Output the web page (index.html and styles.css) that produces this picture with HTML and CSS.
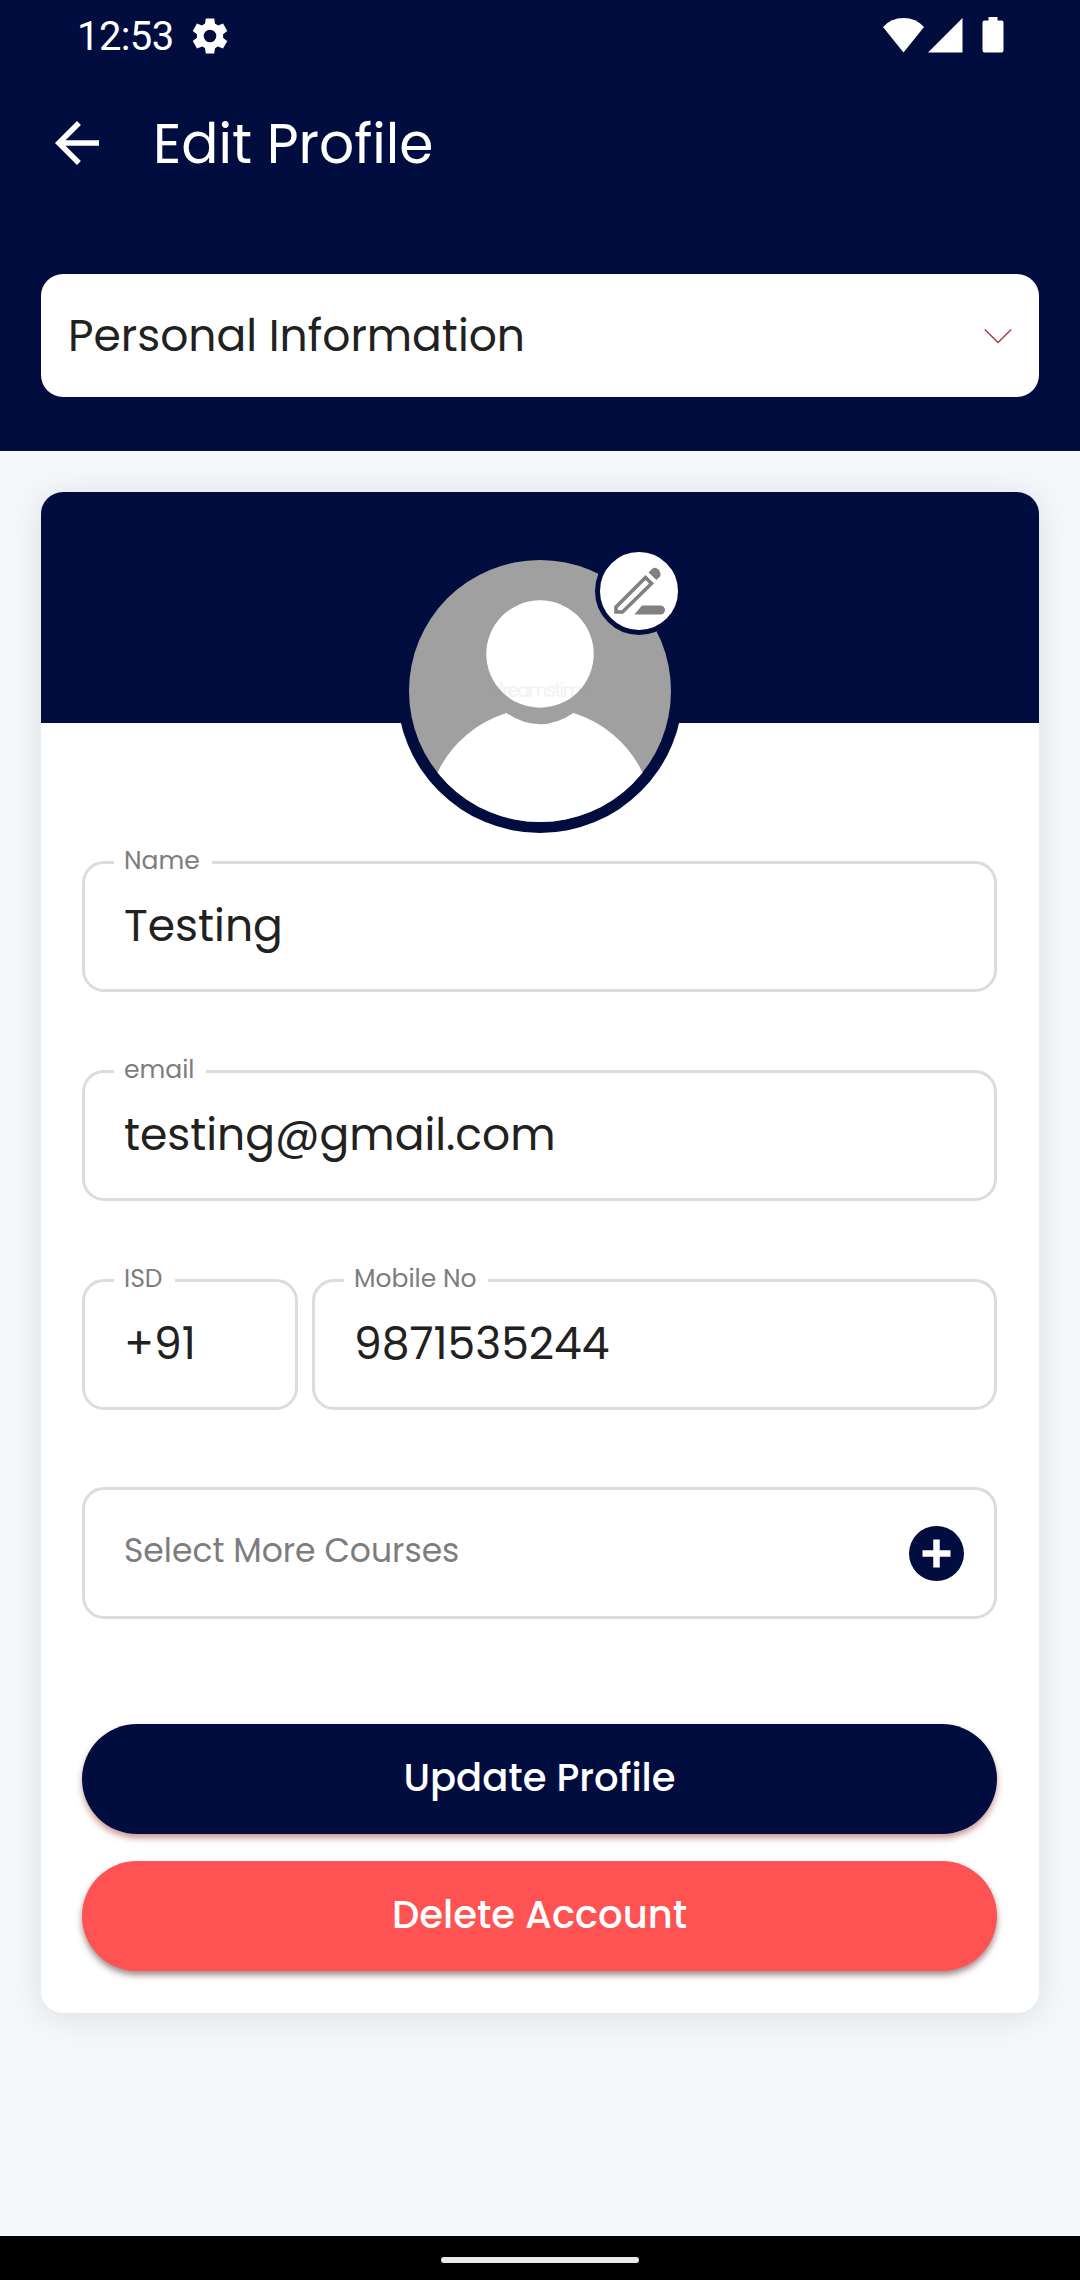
FILE: index.html
```html
<!DOCTYPE html>
<html lang="en">
<head>
  <meta charset="UTF-8">
  <title>Edit Profile</title>
  <link rel="stylesheet" href="styles.css">
</head>
<body>
  <header class="header">
    <!-- status bar -->
    <div class="status-bar">
      <span class="time">12:53</span>
      <svg class="gear" viewBox="0 0 24 24"><path d="M19.440 12.990l-.010.020c.040-.330.080-.670.080-1.010 0-.340-.030-.660-.070-.990l.010.020 2.440-1.920-2.430-4.220-2.870 1.160.010.010c-.520-.400-1.090-.740-1.710-1h.010L14.440 2H9.570l-.440 3.070h.010c-.620.260-1.190.600-1.710 1l.010-.010-2.880-1.170-2.440 4.220 2.440 1.920.010-.020c-.040.330-.070.650-.070.990 0 .340.030.680.080 1.010l-.010-.020-2.100 1.650-.330.260 2.430 4.200 2.880-1.150-.020-.040c.530.410 1.100.750 1.730 1.010h-.030L9.580 22h4.850l.060-.380.380-2.690h-.010c.620-.260 1.200-.600 1.730-1.010l-.020.040 2.880 1.150 2.430-4.200-.330-.260-2.110-1.660zM12 15.600a3.600 3.600 0 1 1 0-7.200 3.600 3.600 0 0 1 0 7.200z"/></svg>
      <svg class="signals" viewBox="0 0 121 37">
        <path d="M0 11Q8 2 20.500 2T41 11L20.500 36.500z"/>
        <path d="M45 36.500L79.500 2v34.500z"/>
        <path d="M105.500 1h9v3.500h4a2 2 0 0 1 2 2v28a2 2 0 0 1-2 2h-17a2 2 0 0 1-2-2v-28a2 2 0 0 1 2-2h4z"/>
      </svg>
    </div>

    <div class="title-bar">
      <svg class="back" viewBox="0 0 24 24"><path d="M20 11H7.830l5.590-5.590L12 4l-8 8 8 8 1.410-1.410L7.830 13H20v-2z"/></svg>
      <h1 class="title">Edit Profile</h1>
    </div>

    <div class="section-select">
      <span class="section-name">Personal Information</span>
      <svg class="chevron" viewBox="0 0 28 16"><path d="M.8 1.500L14 14.500 27.200 1.500"/></svg>
    </div>
  </header>

  <main class="content">
    <div class="card">
      <div class="card-top">
        <div class="avatar">
          <svg class="avatar-img" viewBox="0 0 262 262">
            <path class="avatar-person" d="M29 211.500A113.500 113.500 0 0 1 97.500 153Q131 175.500 164.500 153A113.500 113.500 0 0 1 233 211.500L262 262H0z"/>
            <circle class="avatar-person" cx="131" cy="94" r="53.700"/>
            <text class="avatar-mark" x="82" y="137" textLength="101">dreamstime</text>
          </svg>
          <div class="edit-badge">
            <svg class="pencil" viewBox="0 0 51 48">
              <path class="pencil-line" d="M2 40L31.500 10.500 37.500 16.500 8.500 45H2z"/>
              <path d="M34.500 5.500L38 2Q41-.5 44.500 2.500Q47.500 6 46 9.500L42.500 13z"/>
              <path d="M28 38.500H46.500a4.500 4.500 0 0 1 0 9H20.500z"/>
            </svg>
          </div>
        </div>
      </div>

      <!-- profile form -->
      <form class="form">
        <fieldset class="field">
          <legend class="label">Name</legend>
          <div class="value">Testing</div>
        </fieldset>

        <fieldset class="field">
          <legend class="label">email</legend>
          <div class="value">testing@gmail.com</div>
        </fieldset>

        <div class="phone-row">
          <fieldset class="field isd">
            <legend class="label">ISD</legend>
            <div class="value">+91</div>
          </fieldset>
          <fieldset class="field mobile">
            <legend class="label">Mobile No</legend>
            <div class="value">9871535244</div>
          </fieldset>
        </div>

        <div class="courses">
          <span class="courses-text">Select More Courses</span>
          <svg class="plus" viewBox="0 0 55 55"><circle cx="27.500" cy="27.500" r="27.500"/><path d="M13.500 27.500h28M27.500 13.500v28"/></svg>
        </div>

        <button type="button" class="btn btn-update">Update Profile</button>
        <button type="button" class="btn btn-delete">Delete Account</button>
      </form>
    </div>
  </main>

  <footer class="nav-bar"><div class="handle"></div></footer>
</body>
</html>
```
FILE: styles.css
```css
* {
  box-sizing: border-box;
}
body {
  margin: 0;
  height: 2280px;
  display: flex;
  flex-direction: column;
  background: #f4f8fb;
  color: #212121;
  font-family: Poppins, Inter, sans-serif;
}
svg {
  display: block;
  flex: none;
}

/* header */
.header {
  height: 451px;
  padding: 0 41px;
  background: #020d3f;
  color: #fff;
}
.status-bar {
  height: 72px;
  padding: 0 35px 0 36px;
  display: flex;
  align-items: center;
}
.time {
  padding-top: 2px;
  font-family: Roboto, sans-serif;
  font-size: 40px;
  line-height: 70px;
  letter-spacing: -0.6px;
}
.gear {
  width: 42px;
  height: 42px;
  margin-left: 15px;
  fill: #fff;
}
.signals {
  width: 121px;
  height: 37px;
  margin-left: auto;
  margin-bottom: 4px;
  fill: #fff;
}
.title-bar {
  height: 142px;
  padding-left: 3px;
  display: flex;
  align-items: center;
}
.back {
  width: 66px;
  height: 66px;
  fill: #fff;
}
.title {
  margin: 0 0 0 43px;
  font-size: 55px;
  font-weight: 400;
}
.section-select {
  height: 123px;
  margin-top: 60px;
  padding: 0 27px;
  display: flex;
  align-items: center;
  justify-content: space-between;
  background: #fff;
  border-radius: 22px;
  color: #212121;
}
.section-name {
  font-size: 44px;
}
.chevron {
  width: 28px;
  height: 16px;
  fill: none;
  stroke: #a5383c;
  stroke-width: 1.4;
}

/* card */
.content {
  flex: 1;
  padding: 41px;
}
.card {
  height: 1521px;
  background: #fff;
  border-radius: 22px;
  box-shadow: 0 4px 36px rgba(0, 0, 0, 0.1);
}
.card-top {
  height: 231px;
  padding-top: 55px;
  display: flex;
  justify-content: center;
  background: #020d3f;
  border-radius: 22px 22px 0 0;
}
.avatar {
  position: relative;
  width: 286px;
  height: 286px;
  padding: 13px 12px 11px;
  flex: none;
  background: #020d3f;
  border-radius: 50%;
}
.avatar-img {
  width: 262px;
  height: 262px;
  background: #a0a0a0;
  border-radius: 50%;
}
.avatar-person {
  fill: #fff;
}
.avatar-mark {
  font-size: 19px;
  font-weight: 500;
  fill: #999;
  opacity: 0.12;
}
.edit-badge {
  position: absolute;
  top: 0;
  right: 0;
  width: 88px;
  height: 88px;
  display: flex;
  align-items: center;
  justify-content: center;
  background: #fff;
  border: 5.5px solid #020d3f;
  border-radius: 50%;
}
.pencil {
  width: 51px;
  height: 48px;
  fill: #808080;
}
.pencil-line {
  fill: none;
  stroke: #808080;
  stroke-width: 3.6;
}

/* form */
.form {
  padding: 124px 42px 0 41px;
}
.field {
  height: 145px;
  margin: 0 0 64px;
  padding: 0 29px;
  min-width: 0;
  border: 3px solid #dcdcdc;
  border-radius: 22px;
}
.label {
  height: 30px;
  padding: 0 12px 0 10px;
  color: #7d7d7d;
  font-size: 25px;
  line-height: 28px;
}
.value {
  padding-left: 10px;
  font-size: 44px;
  line-height: 98px;
}
.phone-row {
  display: flex;
  gap: 14px;
}
.isd {
  width: 216px;
}
.mobile {
  flex: 1;
}
.courses {
  height: 132px;
  margin-top: 13px;
  padding: 0 30px 0 39px;
  display: flex;
  align-items: center;
  justify-content: space-between;
  border: 3px solid #dcdcdc;
  border-radius: 22px;
}
.courses-text {
  padding-bottom: 5px;
  color: #7d7d7d;
  font-size: 33px;
}
.plus {
  width: 55px;
  height: 55px;
  fill: #020d3f;
  stroke: #fff;
  stroke-width: 6.5;
}
.plus circle {
  stroke: none;
}

/* buttons */
.btn {
  display: block;
  width: 100%;
  height: 110px;
  padding: 0 0 4px;
  border: none;
  border-radius: 55px;
  color: #fff;
  font-family: inherit;
  font-size: 38.5px;
  font-weight: 500;
  cursor: pointer;
}
.btn-update {
  margin-top: 105px;
  background: #020d3f;
  box-shadow: 0 4px 6px rgba(150, 50, 40, 0.5);
}
.btn-delete {
  margin-top: 27px;
  background: #ff5252;
  box-shadow: 0 4px 6px rgba(70, 20, 20, 0.5);
}

/* system navigation */
.nav-bar {
  height: 44px;
  display: flex;
  justify-content: center;
  align-items: center;
  padding-top: 4px;
  background: #000;
}
.handle {
  width: 198px;
  height: 6px;
  background: #ece9ee;
  border-radius: 3px;
}
```
